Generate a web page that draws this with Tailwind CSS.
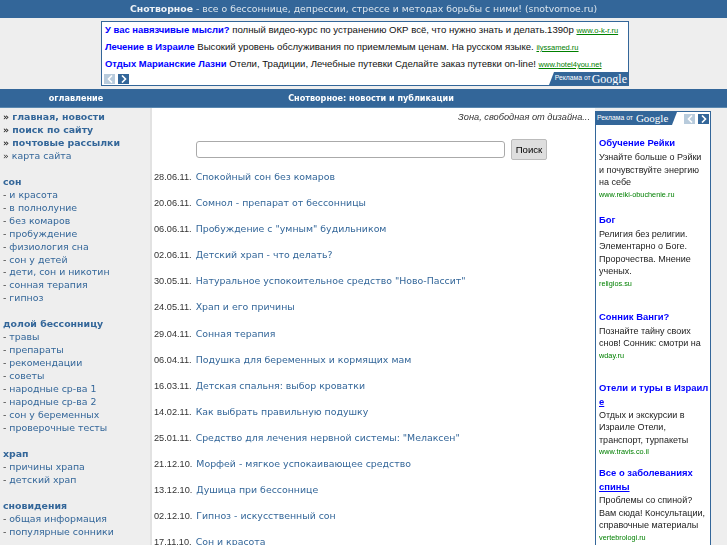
<!DOCTYPE html>
<html lang="ru">
<head>
<meta charset="UTF-8">
<title>Снотворное</title>
<script src="https://cdn.jsdelivr.net/npm/@tailwindcss/browser@4"></script>
</head>
<body class="bg-white h-[545px] overflow-hidden font-['DejaVu_Sans',sans-serif] text-[9.4px] text-[#333] blur-[0.3px]">
  <!-- top title -->
  <div class="bg-[#336699] h-[18px] text-center text-[9.3px] leading-[18px] text-[#dde6ee]">
    <b class="text-[#eef2f6]">Снотворное</b> - все о бессоннице, депрессии, стрессе и методах борьбы с ними! (snotvornoe.ru)
  </div>

  <!-- top ad -->
  <div class="bg-[#eeeeee] h-[71px] pt-[3px]">
    <div class="relative ml-[101px] w-[528px] h-[65px] bg-white border border-[#336699] font-['Liberation_Sans',sans-serif] text-[9.6px] text-[#111] pl-[3px]">
      <p class="h-[17px] leading-[15px] whitespace-nowrap"><a class="font-bold text-[#0000ff] text-[9.45px]">У вас навязчивые мысли?</a> полный видео-курс по устранению ОКР всё, что нужно знать и делать.1390р <a class="underline text-[7.5px] text-[#008000]">www.o-k-r.ru</a></p>
      <p class="h-[17px] leading-[15px] whitespace-nowrap"><a class="font-bold text-[#0000ff] text-[9.45px]">Лечение в Израиле</a> Высокий уровень обслуживания по приемлемым ценам. На русском языке. <a class="underline text-[7.5px] text-[#008000]">ilyssamed.ru</a></p>
      <p class="h-[17px] leading-[15px] whitespace-nowrap"><a class="font-bold text-[#0000ff] text-[9.45px]">Отдых Марианские Лазни</a> Отели, Традиции, Лечебные путевки Сделайте заказ путевки on-line! <a class="underline text-[7.5px] text-[#008000]">www.hotel4you.net</a></p>
      <div class="absolute left-[2px] bottom-[1px] flex gap-[3px]">
        <span class="w-[11px] h-[10px] bg-[#b8cbdc] flex items-center justify-center"><svg width="6" height="8" viewBox="0 0 6 8"><path d="M5 0.5 1.5 4 5 7.5" fill="none" stroke="#fff" stroke-width="1.6"/></svg></span>
        <span class="w-[11px] h-[10px] bg-[#336699] flex items-center justify-center"><svg width="6" height="8" viewBox="0 0 6 8"><path d="M1 0.5 4.5 4 1 7.5" fill="none" stroke="#fff" stroke-width="1.6"/></svg></span>
      </div>
      <div class="absolute right-0 bottom-0 w-[79px] h-[13px] bg-[#336699] [clip-path:polygon(5px_0,100%_0,100%_100%,0_100%)] flex items-center justify-end pr-[1px] text-white text-[6.8px] gap-[1px] whitespace-nowrap">Реклама от <span class="font-['Liberation_Serif'] text-[12px] leading-[12px]">Google</span></div>
    </div>
  </div>

  <!-- section bar -->
  <div class="bg-[#336699] h-[19px] border-b border-[#5a88b0] flex text-white font-bold text-[8.1px] leading-[18px]">
    <div class="w-[152px] text-center">оглавление</div>
    <div class="w-[438px] text-center">Снотворное: новости и публикации</div>
  </div>

  <div class="flex items-start">
    <!-- left menu -->
    <div class="w-[152px] h-[437px] bg-[#eeeeee] border-r-2 border-[#e2e2e2] pt-[3px] pl-[3px] leading-[12.96px] text-[#336699] shrink-0">
      <div class="font-bold"><span class="text-[#333]">»</span> главная, новости</div>
      <div class="font-bold"><span class="text-[#333]">»</span> поиск по сайту</div>
      <div class="font-bold"><span class="text-[#333]">»</span> почтовые рассылки</div>
      <div><span class="text-[#333]">»</span> карта сайта</div>
      <div class="h-[13px]"></div>
      <div class="font-bold">сон</div>
      <div><span class="text-[#333]">-</span> и красота</div>
      <div><span class="text-[#333]">-</span> в полнолуние</div>
      <div><span class="text-[#333]">-</span> без комаров</div>
      <div><span class="text-[#333]">-</span> пробуждение</div>
      <div><span class="text-[#333]">-</span> физиология сна</div>
      <div><span class="text-[#333]">-</span> сон у детей</div>
      <div><span class="text-[#333]">-</span> дети, сон и никотин</div>
      <div><span class="text-[#333]">-</span> сонная терапия</div>
      <div><span class="text-[#333]">-</span> гипноз</div>
      <div class="h-[13px]"></div>
      <div class="font-bold">долой бессонницу</div>
      <div><span class="text-[#333]">-</span> травы</div>
      <div><span class="text-[#333]">-</span> препараты</div>
      <div><span class="text-[#333]">-</span> рекомендации</div>
      <div><span class="text-[#333]">-</span> советы</div>
      <div><span class="text-[#333]">-</span> народные ср-ва 1</div>
      <div><span class="text-[#333]">-</span> народные ср-ва 2</div>
      <div><span class="text-[#333]">-</span> сон у беременных</div>
      <div><span class="text-[#333]">-</span> проверочные тесты</div>
      <div class="h-[13px]"></div>
      <div class="font-bold">храп</div>
      <div><span class="text-[#333]">-</span> причины храпа</div>
      <div><span class="text-[#333]">-</span> детский храп</div>
      <div class="h-[13px]"></div>
      <div class="font-bold">сновидения</div>
      <div><span class="text-[#333]">-</span> общая информация</div>
      <div><span class="text-[#333]">-</span> популярные сонники</div>
    </div>

    <!-- center -->
    <div class="w-[443px] shrink-0 pl-[2px] pr-[5px]">
      <p class="text-right italic leading-[13px] pt-[3px] font-['Liberation_Sans'] text-[9.25px]">Зона, свободная от дизайна...</p>
      <div class="flex items-center gap-[6px] mt-[15px] ml-[42px]">
        <div class="w-[309px] h-[17px] bg-white border border-[#aaa] rounded-[3px]"></div>
        <div class="w-[36px] h-[21px] bg-[#dedede] border border-[#bbb] rounded-[2px] text-[9.6px] leading-[19px] text-center text-black font-['Liberation_Sans']">Поиск</div>
      </div>
      <div class="mt-[10px] grid auto-rows-[26.1px] leading-[13px] whitespace-nowrap">
        <div><span class="font-['Liberation_Sans'] text-[9.2px] mr-[1px]">28.06.11.</span> <a class="text-[#336699]">Спокойный сон без комаров</a></div>
        <div><span class="font-['Liberation_Sans'] text-[9.2px] mr-[1px]">20.06.11.</span> <a class="text-[#336699]">Сомнол - препарат от бессонницы</a></div>
        <div><span class="font-['Liberation_Sans'] text-[9.2px] mr-[1px]">06.06.11.</span> <a class="text-[#336699]">Пробуждение с "умным" будильником</a></div>
        <div><span class="font-['Liberation_Sans'] text-[9.2px] mr-[1px]">02.06.11.</span> <a class="text-[#336699]">Детский храп - что делать?</a></div>
        <div><span class="font-['Liberation_Sans'] text-[9.2px] mr-[1px]">30.05.11.</span> <a class="text-[#336699]">Натуральное успокоительное средство "Ново-Пассит"</a></div>
        <div><span class="font-['Liberation_Sans'] text-[9.2px] mr-[1px]">24.05.11.</span> <a class="text-[#336699]">Храп и его причины</a></div>
        <div><span class="font-['Liberation_Sans'] text-[9.2px] mr-[1px]">29.04.11.</span> <a class="text-[#336699]">Сонная терапия</a></div>
        <div><span class="font-['Liberation_Sans'] text-[9.2px] mr-[1px]">06.04.11.</span> <a class="text-[#336699]">Подушка для беременных и кормящих мам</a></div>
        <div><span class="font-['Liberation_Sans'] text-[9.2px] mr-[1px]">16.03.11.</span> <a class="text-[#336699]">Детская спальня: выбор кроватки</a></div>
        <div><span class="font-['Liberation_Sans'] text-[9.2px] mr-[1px]">14.02.11.</span> <a class="text-[#336699]">Как выбрать правильную подушку</a></div>
        <div><span class="font-['Liberation_Sans'] text-[9.2px] mr-[1px]">25.01.11.</span> <a class="text-[#336699]">Средство для лечения нервной системы: "Мелаксен"</a></div>
        <div><span class="font-['Liberation_Sans'] text-[9.2px] mr-[1px]">21.12.10.</span> <a class="text-[#336699]">Морфей - мягкое успокаивающее средство</a></div>
        <div><span class="font-['Liberation_Sans'] text-[9.2px] mr-[1px]">13.12.10.</span> <a class="text-[#336699]">Душица при бессоннице</a></div>
        <div><span class="font-['Liberation_Sans'] text-[9.2px] mr-[1px]">02.12.10.</span> <a class="text-[#336699]">Гипноз - искусственный сон</a></div>
        <div><span class="font-['Liberation_Sans'] text-[9.2px] mr-[1px]">17.11.10.</span> <a class="text-[#336699]">Сон и красота</a></div>
      </div>
    </div>

    <!-- right ad -->
    <div class="flex-1 self-stretch bg-[#eeeeee] pt-[3px] h-[437px]">
      <div class="w-[116px] h-[434px] bg-white border border-[#336699] border-b-0 overflow-hidden font-['Liberation_Sans',sans-serif] text-[9px] leading-[12.5px] text-[#222]">
        <div class="h-[13px] flex items-center">
          <div class="w-[81px] h-[13px] bg-[#336699] [clip-path:polygon(0_0,100%_0,calc(100%-5px)_100%,0_100%)] text-white text-[6.8px] pl-[1px] flex items-center gap-[3px] whitespace-nowrap">Реклама от <span class="font-['Liberation_Serif'] text-[11px] leading-[11px]">Google</span></div>
          <span class="ml-[7px] mt-[1px] w-[11px] h-[10px] bg-[#b8cbdc] flex items-center justify-center"><svg width="6" height="8" viewBox="0 0 6 8"><path d="M5 0.5 1.5 4 5 7.5" fill="none" stroke="#fff" stroke-width="1.6"/></svg></span>
          <span class="ml-[3px] mt-[1px] w-[11px] h-[10px] bg-[#336699] flex items-center justify-center"><svg width="6" height="8" viewBox="0 0 6 8"><path d="M1 0.5 4.5 4 1 7.5" fill="none" stroke="#fff" stroke-width="1.6"/></svg></span>
        </div>
        <div class="pl-[3px] pt-[11px] [&_a]:text-[9.45px]">
          <a class="block mb-[2px] font-bold text-[#0000ff] leading-[13px]">Обучение Рейки</a>
          <p>Узнайте больше о Рэйки<br>и почувствуйте энергию<br>на себе</p>
          <p class="text-[7.3px] text-[#008000] leading-[11px]">www.reiki-obuchenie.ru</p>
          <a class="block mt-[13px] mb-[2px] font-bold text-[#0000ff] leading-[13px]">Бог</a>
          <p>Религия без религии.<br>Элементарно о Боге.<br>Пророчества. Мнение<br>ученых.</p>
          <p class="text-[7.3px] text-[#008000] leading-[11px]">religios.su</p>
          <a class="block mt-[21px] mb-[2px] font-bold text-[#0000ff] leading-[13px]">Сонник Ванги?</a>
          <p>Познайте тайну своих<br>снов! Сонник: смотри на</p>
          <p class="text-[7.3px] text-[#008000] leading-[11px]">wday.ru</p>
          <a class="block mt-[20px] font-bold text-[#0000ff] leading-[14px] whitespace-nowrap">Отели и туры в Израил</a>
          <a class="block mb-[1px] font-bold text-[#0000ff] underline leading-[13px]">е</a>
          <p>Отдых и экскурсии в<br>Израиле Отели,<br>транспорт, турпакеты</p>
          <p class="text-[7.3px] text-[#008000] leading-[11px]">www.travis.co.il</p>
          <a class="block mt-[9px] font-bold text-[#0000ff] leading-[14px]">Все о заболеваниях<br><span class="underline">спины</span></a>
          <p>Проблемы со спиной?<br>Вам сюда! Консультации,<br>справочные материалы</p>
          <p class="text-[7.3px] text-[#008000] leading-[11px]">vertebrologi.ru</p>
        </div>
      </div>
    </div>
  </div>
</body>
</html>
